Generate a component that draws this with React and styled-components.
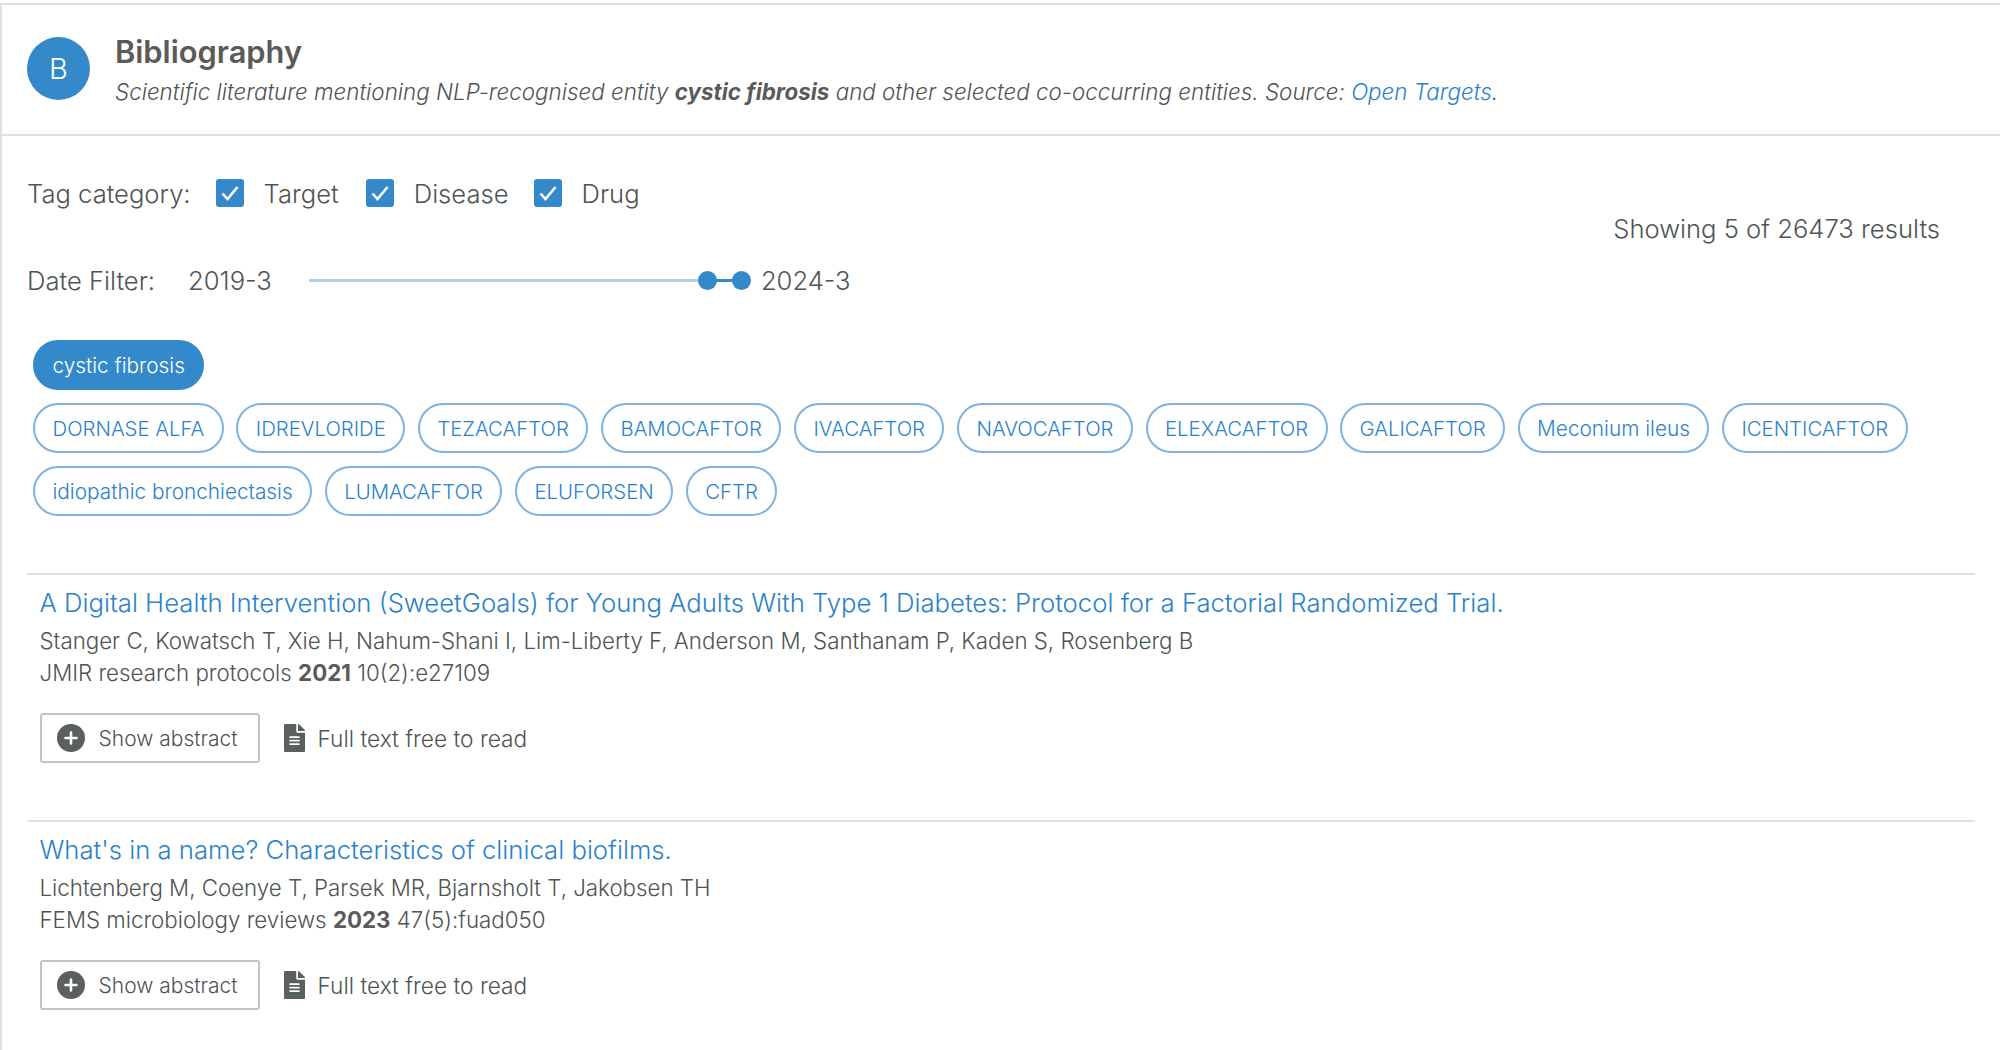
import React from 'react';
import styled, { createGlobalStyle } from 'styled-components';

const GlobalStyle = createGlobalStyle`
  html, body {
    margin: 0;
    padding: 0;
    height: 1050px;
    overflow: hidden;
    background: #fff;
    font-family: Inter, "Noto Sans", sans-serif;
    font-weight: 300;
    color: #4f5454;
  }
`;

const Card = styled.div`
  margin-top: 3px;
  height: 1045px;
  overflow: hidden;
  border: 1px solid #e0e0e0;
  border-width: 2px 0 0 2px;
  background: #fff;
`;

const Header = styled.div`
  height: 131px;
  box-sizing: border-box;
  padding: 32px 25px 0;
  display: flex;
  gap: 25px;
  border-bottom: 2px solid #e0e0e0;
`;

const Avatar = styled.div`
  width: 63px;
  height: 63px;
  border-radius: 50%;
  background: #3489ca;
  color: #fff;
  font-size: 29px;
  font-weight: 300;
  display: flex;
  align-items: center;
  justify-content: center;
  flex: none;
`;

const HeaderText = styled.div`
  margin-top: -3px;
`;

const CardTitle = styled.div`
  font-size: 30.8px;
  line-height: 36px;
  font-weight: 600;
  color: #5a5a5a;
`;

const CardSubtitle = styled.div`
  margin-top: 7px;
  font-size: 22.4px;
  line-height: 30px;
  font-style: italic;
  b { font-weight: 700; color: #5a5a5a; }
`;

const Link = styled.a`
  color: #2b82c9;
  text-decoration: none;
`;

const Body = styled.div`
  padding: 0 25px;
`;

const Controls = styled.div`
  display: flex;
  justify-content: space-between;
`;

const Filters = styled.div`
  font-size: 25.6px;
`;

const Row = styled.div`
  display: flex;
  align-items: center;
  height: 36px;
`;

const TagRow = styled(Row)`
  margin-top: 39px;
`;

const DateRow = styled(Row)`
  margin-top: 51px;
`;

const Check = styled.span`
  width: 28px;
  height: 28px;
  border-radius: 3px;
  background: #3489ca;
  margin: 0 20px 0 ${(p) => p.$gap}px;
  display: flex;
  align-items: center;
  justify-content: center;
`;

const DateFrom = styled.span`
  margin-left: 33px;
`;

const Slider = styled.div`
  position: relative;
  width: 433px;
  height: 3px;
  margin: 0 19px 0 37px;
  background: #aed0ea;
`;

const SliderRange = styled.div`
  position: absolute;
  left: 399px;
  width: 34px;
  height: 3px;
  background: #3489ca;
`;

const Thumb = styled.span`
  position: absolute;
  top: -8px;
  left: ${(p) => p.$left}px;
  width: 19px;
  height: 19px;
  margin-left: -9.5px;
  border-radius: 50%;
  background: #3489ca;
`;

const Showing = styled.div`
  font-size: 25.6px;
  line-height: 36px;
  margin-top: 75px;
  margin-right: 35px;
`;

const Chips = styled.div`
  margin-top: 42px;
  padding-left: 6px;
  display: flex;
  flex-direction: column;
  gap: 13px;
`;

const ChipRow = styled.div`
  display: flex;
  gap: 12.5px;
`;

const Chip = styled.div`
  box-sizing: border-box;
  height: 50px;
  padding: 0 17.5px;
  display: flex;
  align-items: center;
  border-radius: 25px;
  font-size: ${(p) => (p.$lower ? 20.8 : 20.35)}px;
  border: 2px solid ${(p) => (p.$active ? '#3489ca' : '#7fb2de')};
  background: ${(p) => (p.$active ? '#3489ca' : '#fff')};
  color: ${(p) => (p.$active ? '#fff' : '#2b82c9')};
`;

const Publication = styled.div`
  margin-top: 57px;
  border-top: 2px solid #e0e0e0;
  padding: 12px 12.5px 0;
  height: 180px;
  & + & { margin-top: 53px; }
`;

const PubTitle = styled.div`
  font-size: 25.7px;
  line-height: 32px;
  color: #2b82c9;
`;

const PubLine = styled.div`
  font-size: 22.3px;
  line-height: 32px;
  b { font-weight: 700; color: #5a5a5a; }
`;

const Authors = styled(PubLine)`
  margin-top: 6px;
`;

const Actions = styled.div`
  margin-top: 24px;
  display: flex;
  align-items: center;
`;

const AbstractButton = styled.div`
  box-sizing: border-box;
  width: 220px;
  height: 50px;
  border: 2px solid #c4c4c4;
  border-radius: 3px;
  padding-left: 15px;
  display: flex;
  align-items: center;
  gap: 14px;
  font-size: 21px;
`;

const FullText = styled.div`
  margin-left: 24px;
  display: flex;
  align-items: center;
  gap: 13px;
  font-size: 22.7px;
`;

const CheckIcon = () => (
  <svg width="20" height="20" viewBox="0 0 20 20" fill="none" stroke="#fff" strokeWidth="2.6">
    <path d="M2.5 10.5 L7.5 16 L17.5 4" />
  </svg>
);

const PlusCircleIcon = () => (
  <svg width="28" height="28" viewBox="0 0 28 28">
    <circle cx="14" cy="14" r="14" fill="#5a5f5f" />
    <path d="M14 8.5v11M8.5 14h11" stroke="#fff" strokeWidth="2.6" strokeLinecap="round" />
  </svg>
);

const FileIcon = () => (
  <svg width="21" height="28" viewBox="0 0 384 512" fill="#5a5f5f">
    <path d="M224 136V0H24C10.7 0 0 10.7 0 24v464c0 13.3 10.7 24 24 24h336c13.3 0 24-10.7 24-24V160H248c-13.2 0-24-10.8-24-24zm64 236c0 6.600-5.400 12-12 12H108c-6.600 0-12-5.400-12-12v-8c0-6.600 5.400-12 12-12h168c6.600 0 12 5.400 12 12v8zm0-64c0 6.600-5.400 12-12 12H108c-6.600 0-12-5.400-12-12v-8c0-6.600 5.400-12 12-12h168c6.600 0 12 5.400 12 12v8zm0-72v8c0 6.600-5.400 12-12 12H108c-6.600 0-12-5.400-12-12v-8c0-6.600 5.400-12 12-12h168c6.600 0 12 5.400 12 12zm96-114.100v6.100H256V0h6.100c6.400 0 12.500 2.500 17 7l97.900 98c4.500 4.500 7 10.600 7 16.900z" />
  </svg>
);

const rowOne = [
  'DORNASE ALFA', 'IDREVLORIDE', 'TEZACAFTOR', 'BAMOCAFTOR', 'IVACAFTOR', 'NAVOCAFTOR',
  'ELEXACAFTOR', 'GALICAFTOR', 'Meconium ileus', 'ICENTICAFTOR',
];
const rowTwo = ['idiopathic bronchiectasis', 'LUMACAFTOR', 'ELUFORSEN', 'CFTR'];

const publications = [
  {
    title: 'A Digital Health Intervention (SweetGoals) for Young Adults With Type 1 Diabetes: Protocol for a Factorial Randomized Trial.',
    authors: 'Stanger C, Kowatsch T, Xie H, Nahum-Shani I, Lim-Liberty F, Anderson M, Santhanam P, Kaden S, Rosenberg B',
    journal: 'JMIR research protocols',
    year: '2021',
    ref: '10(2):e27109',
  },
  {
    title: "What's in a name? Characteristics of clinical biofilms.",
    authors: 'Lichtenberg M, Coenye T, Parsek MR, Bjarnsholt T, Jakobsen TH',
    journal: 'FEMS microbiology reviews',
    year: '2023',
    ref: '47(5):fuad050',
  },
];

const isLower = (c) => c !== c.toUpperCase();

export default function App() {
  return (
    <>
      <GlobalStyle />
      <Card>
        <Header>
          <Avatar>B</Avatar>
          <HeaderText>
            <CardTitle>Bibliography</CardTitle>
            <CardSubtitle>
              Scientific literature mentioning NLP-recognised entity <b>cystic fibrosis</b> and other selected co-occurring entities. Source: <Link>Open Targets</Link>.
            </CardSubtitle>
          </HeaderText>
        </Header>
        <Body>
          <Controls>
            <Filters>
              <TagRow>
                Tag category:
                <Check $gap={25}><CheckIcon /></Check>Target
                <Check $gap={27}><CheckIcon /></Check>Disease
                <Check $gap={25}><CheckIcon /></Check>Drug
              </TagRow>
              <DateRow>
                Date Filter:
                <DateFrom>2019-3</DateFrom>
                <Slider>
                  <SliderRange />
                  <Thumb $left={399} />
                  <Thumb $left={433} />
                </Slider>
                2024-3
              </DateRow>
            </Filters>
            <Showing>Showing 5 of 26473 results</Showing>
          </Controls>
          <Chips>
            <ChipRow><Chip $active $lower>cystic fibrosis</Chip></ChipRow>
            <ChipRow>{rowOne.map((c) => <Chip key={c} $lower={isLower(c)}>{c}</Chip>)}</ChipRow>
            <ChipRow>{rowTwo.map((c) => <Chip key={c} $lower={isLower(c)}>{c}</Chip>)}</ChipRow>
          </Chips>
          {publications.map((p) => (
            <Publication key={p.title}>
              <PubTitle>{p.title}</PubTitle>
              <Authors>{p.authors}</Authors>
              <PubLine>{p.journal} <b>{p.year}</b> {p.ref}</PubLine>
              <Actions>
                <AbstractButton><PlusCircleIcon />Show abstract</AbstractButton>
                <FullText><FileIcon />Full text free to read</FullText>
              </Actions>
            </Publication>
          ))}
        </Body>
      </Card>
    </>
  );
}
